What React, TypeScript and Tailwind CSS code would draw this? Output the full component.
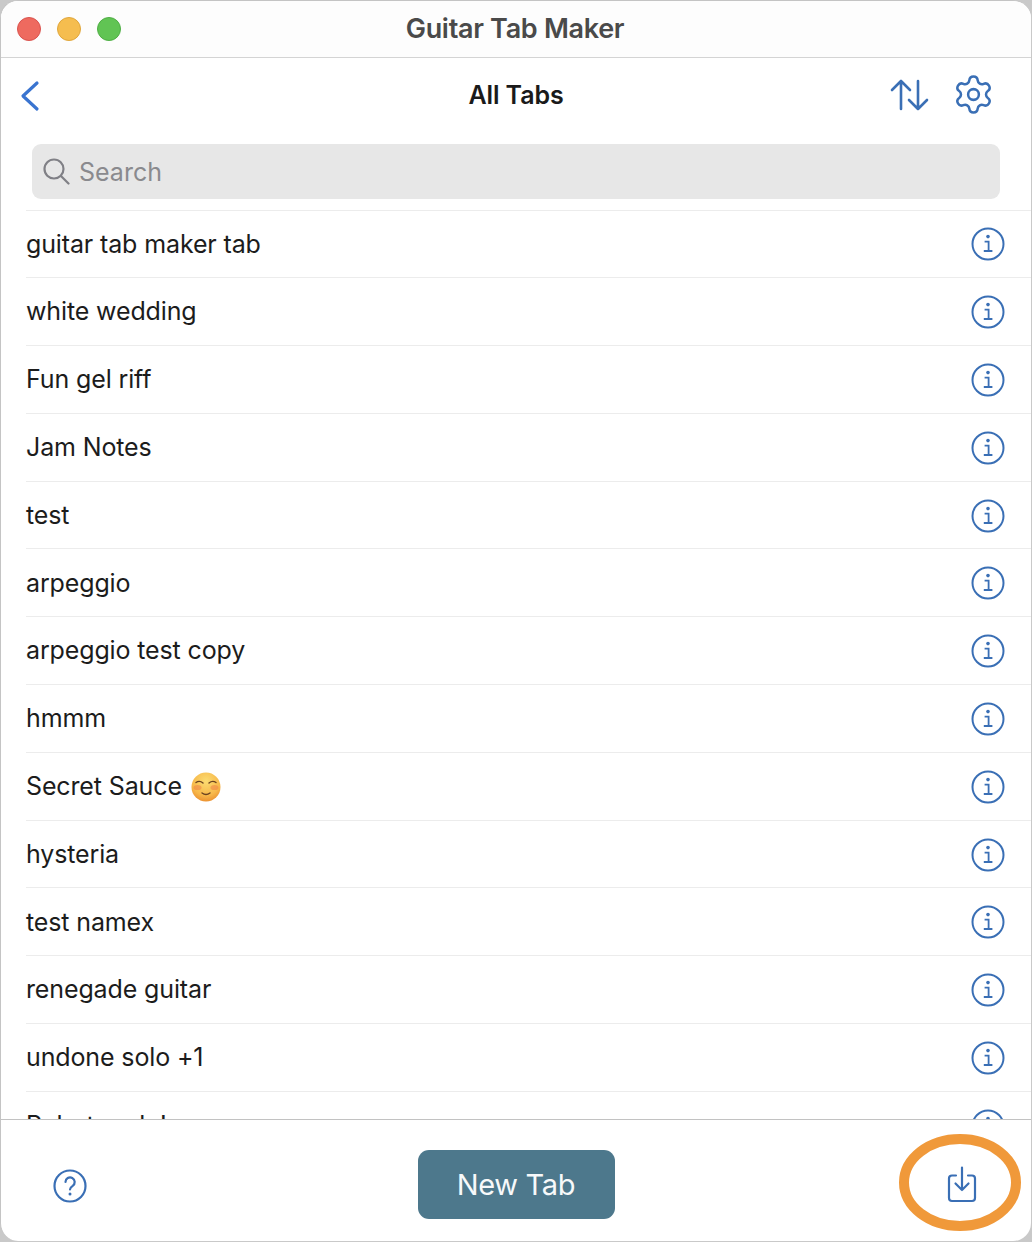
import React from "react";

const tabs = [
  "guitar tab maker tab",
  "white wedding",
  "Fun gel riff",
  "Jam Notes",
  "test",
  "arpeggio",
  "arpeggio test copy",
  "hmmm",
  "Secret Sauce",
  "hysteria",
  "test namex",
  "renegade guitar",
  "undone solo +1",
  "Robot rock !",
];

function InfoIcon() {
  return (
    <svg width="34" height="34" viewBox="0 0 34 34" fill="none" stroke="#3a6fb5" strokeWidth="2">
      <circle cx="17" cy="17" r="15.5" />
      <circle cx="17" cy="9.6" r="1.8" fill="#3a6fb5" stroke="none" />
      <path d="M13.6 14.6h4v9.2M12.8 24h8.6" strokeWidth="1.8" />
    </svg>
  );
}

function Relaxed() {
  return (
    <svg width="30" height="30" viewBox="0 0 30 30" fill="none">
      <defs>
        <radialGradient id="face" cx="50%" cy="30%" r="75%">
          <stop offset="0%" stopColor="#fbdc72" />
          <stop offset="65%" stopColor="#f7b84a" />
          <stop offset="100%" stopColor="#e98a2c" />
        </radialGradient>
      </defs>
      <circle cx="15" cy="15" r="14.5" fill="url(#face)" />
      <ellipse cx="6.5" cy="15.5" rx="4" ry="2.6" fill="#ee8248" opacity="0.55" />
      <ellipse cx="23.5" cy="15.5" rx="4" ry="2.6" fill="#ee8248" opacity="0.55" />
      <path d="M5 10.5q3.5-2.5 7 .5M18 11q3.5-3 7-.5" stroke="#6b4320" strokeWidth="1.4" strokeLinecap="round" />
      <path d="M11 21q4 3 8 0" stroke="#6b4320" strokeWidth="1.4" strokeLinecap="round" />
    </svg>
  );
}

export default function App() {
  return (
    <div className="relative h-[1242px] w-[1032px] overflow-hidden bg-[#c9c9c9] font-['Inter','Liberation_Sans',sans-serif]">
      <div className="flex h-[1241px] w-[1031px] flex-col overflow-hidden rounded-[18px] border-l border-t border-[#c4c4c4] bg-white">
        {/* title bar */}
        <div className="relative flex h-[57px] shrink-0 items-center justify-center border-b border-[#d4d4d4] bg-[#fdfdfd]">
          <div className="absolute left-[16px] top-[16px] flex gap-[16px]">
            <div className="h-[24px] w-[24px] rounded-full border border-[#d9534f] bg-[#ee6a5f]" />
            <div className="h-[24px] w-[24px] rounded-full border border-[#dfa63c] bg-[#f5bd4f]" />
            <div className="h-[24px] w-[24px] rounded-full border border-[#4fae45] bg-[#61c454]" />
          </div>
          <span className="pr-[2px] text-[27px] font-semibold tracking-[-0.3px] text-[#4a4a4a]">Guitar Tab Maker</span>
        </div>

        {/* nav bar */}
        <div className="relative flex h-[76px] shrink-0 items-center justify-center pb-[1px]">
          <svg className="absolute left-[19px] top-[22px]" width="20" height="32" viewBox="0 0 20 32" fill="none" stroke="#3a74d0" strokeWidth="3.2" strokeLinecap="round" strokeLinejoin="round">
            <path d="M17 3 3 16l14 13" />
          </svg>
          <span className="text-[25px] font-semibold tracking-[-0.1px] text-[#1a1a1a]">All Tabs</span>
          <svg className="absolute left-[889px] top-[20px]" width="40" height="34" viewBox="0 0 40 34" fill="none" stroke="#3a6fb5" strokeWidth="2.6" strokeLinecap="round" strokeLinejoin="round">
            <path d="M11 31V3M2 12l9-9 9 9M28 3v28M19 22l9 9 9-9" />
          </svg>
          <svg className="absolute left-[951px] top-[15px]" width="43" height="43" viewBox="0 0 24 24" fill="none" stroke="#3a6fb5" strokeWidth="1.4" strokeLinecap="round" strokeLinejoin="round">
            <path d="M9.671 4.136a2.34 2.34 0 0 1 4.659 0 2.34 2.34 0 0 0 3.319 1.915 2.34 2.34 0 0 1 2.33 4.033 2.34 2.34 0 0 0 0 3.831 2.34 2.34 0 0 1-2.33 4.033 2.34 2.34 0 0 0-3.319 1.915 2.34 2.34 0 0 1-4.659 0 2.34 2.34 0 0 0-3.32-1.915 2.34 2.34 0 0 1-2.33-4.033 2.34 2.34 0 0 0 0-3.831A2.34 2.34 0 0 1 6.35 6.051a2.34 2.34 0 0 0 3.319-1.915" />
            <circle cx="12" cy="12" r="3" />
          </svg>
        </div>

        {/* search */}
        <div className="shrink-0 px-[31px] pt-[10px] pb-[10.5px]">
          <div className="flex h-[55px] w-[968px] items-center gap-[9px] rounded-[9px] bg-[#e7e7e7] pl-[11px]">
            <svg width="27" height="27" viewBox="0 0 27 27" fill="none" stroke="#808086" strokeWidth="2.2" strokeLinecap="round">
              <circle cx="11" cy="11" r="9.5" />
              <path d="m18 18 7.5 7.5" />
            </svg>
            <span className="pt-[2px] text-[25px] text-[#8a8a8e]">Search</span>
          </div>
        </div>

        {/* list */}
        <div className="min-h-0 flex-1 overflow-hidden pl-[25px]">
          {tabs.map((name) => (
            <div key={name} className="flex h-[67.8px] items-center justify-between border-t border-[#ececec] pt-[1px] pr-[26px]">
              <span className="flex items-center gap-[9px] text-[25px] tracking-[-0.13px] text-[#1c1c1c]">
                {name}
                {name === "Secret Sauce" && <Relaxed />}
              </span>
              <InfoIcon />
            </div>
          ))}
        </div>

        {/* footer */}
        <div className="relative flex h-[122px] shrink-0 items-center justify-center border-t border-[#c2c2c2] pt-[8px]">
          <svg className="absolute left-[51px] top-[48px]" width="36" height="36" viewBox="0 0 36 36" fill="none" stroke="#3a6fb5" strokeWidth="2.2" strokeLinecap="round">
            <circle cx="18" cy="18" r="15.5" />
            <path d="M13.5 14a4.6 4.6 0 1 1 7.2 3.8c-1.7 1.1-2.7 2-2.7 3.7" />
            <circle cx="18" cy="26" r="1.5" fill="#3a6fb5" stroke="none" />
          </svg>
          <button className="flex h-[69px] w-[197px] items-center justify-center rounded-[11px] bg-[#4d788c] text-[29px] tracking-[-0.3px] text-[#f7f9fa]">
            New Tab
          </button>
          <svg className="absolute left-[945px] top-[46px]" width="32" height="38" viewBox="0 0 32 38" fill="none" stroke="#3a6fb5" strokeWidth="2.2" strokeLinecap="round" strokeLinejoin="round">
            <path d="M10 9.5H6a3 3 0 0 0-3 3V32a3 3 0 0 0 3 3h20a3 3 0 0 0 3-3V12.5a3 3 0 0 0-3-3h-4" />
            <path d="M16 1.5V24M9.5 17.5l6.5 6.5 6.5-6.5" />
          </svg>
        </div>
      </div>

      {/* orange annotation */}
      <svg className="absolute left-[895px] top-[1130px]" width="130" height="106" viewBox="0 0 130 106" fill="none">
        <ellipse cx="65" cy="52.5" rx="56" ry="43.5" stroke="#f0993a" strokeWidth="10" />
      </svg>
    </div>
  );
}
